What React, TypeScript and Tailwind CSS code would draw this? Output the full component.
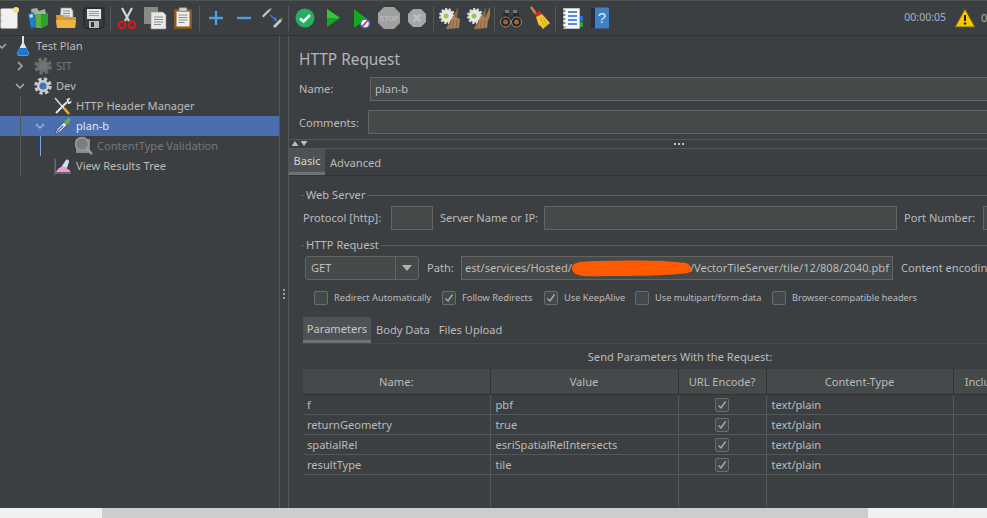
import React from "react";

// --- toolbar drawings ---
function Svg({ children, size = 24 }: { children: React.ReactNode; size?: number }) {
  return (
    <svg width={size} height={size} viewBox="0 0 24 24" fill="none">
      {children}
    </svg>
  );
}

const NewIcon = () => (
  <Svg>
    <rect x="2.500" y="2.500" width="17" height="20" rx="1.500" fill="#f1f1ef" stroke="#9a9a9a" />
    <circle cx="3" cy="9" r=".8" fill="#999" />
    <circle cx="3" cy="15" r=".8" fill="#999" />
    <circle cx="18" cy="4" r="3" fill="#f6e27a" />
  </Svg>
);
const TemplatesIcon = () => (
  <Svg>
    <path d="M5 3l6-1 2 3 6-2 1 5-14 1z" fill="#9fb7a4" />
    <path d="M2 8l6-2 2 15-5 1z" fill="#1d7fd0" />
    <path d="M3.500 9l3-1 .5 3-3 1z" fill="#bfe2f8" />
    <path d="M9 8h6l1 14H10z" fill="#5fb13a" />
    <path d="M15 9l7-2v12l-6 3z" fill="#2ea02c" />
  </Svg>
);
const OpenIcon = () => (
  <Svg>
    <path d="M7 2h10l2 3v8H6z" fill="#e9e9e6" stroke="#8c8c8c" strokeWidth=".7" />
    <path d="M9 5h7M9 7.500h7M9 10h7" stroke="#8c8c8c" />
    <path d="M2 9h7l1 2h12l-1 11H3z" fill="#d9982f" />
    <path d="M2 14h20l-1 8H3z" fill="#eeb445" />
  </Svg>
);
const SaveIcon = () => (
  <Svg>
    <rect x="2" y="2" width="20" height="20" rx="2" fill="#3b3b3b" stroke="#1f1f1f" />
    <rect x="5" y="3" width="14" height="10" fill="#dfe6ee" />
    <path d="M7 5.500h10M7 7.500h10M7 9.500h10" stroke="#7ea4cb" />
    <rect x="7" y="15" width="10" height="7" fill="#b9b9b9" />
    <rect x="9" y="16" width="3" height="5" fill="#333" />
  </Svg>
);
const CutIcon = () => (
  <Svg>
    <path d="M7 2l7 13M17 2l-7 13" stroke="#d4d4d4" strokeWidth="2.200" />
    <circle cx="7" cy="19" r="3.300" stroke="#d81818" strokeWidth="2.200" />
    <circle cx="17" cy="19" r="3.300" stroke="#d81818" strokeWidth="2.200" />
  </Svg>
);
const CopyIcon = () => (
  <Svg>
    <rect x="1" y="1" width="14" height="17" fill="#8a8a88" />
    <path d="M8 6h12l3 3v14H8z" fill="#e8e8e6" stroke="#8f8f8f" strokeWidth=".6" />
    <path d="M11 11h9M11 13.500h9M11 16h9M11 18.500h7" stroke="#8d8d8d" />
  </Svg>
);
const PasteIcon = () => (
  <Svg>
    <rect x="3" y="3" width="18" height="20" rx="1.500" fill="#8a5a22" />
    <path d="M5.500 5.500h13v15h-13z" fill="#efefec" />
    <rect x="8" y="1.500" width="8" height="4" rx="1" fill="#c9c9c6" stroke="#666" strokeWidth=".5" />
    <path d="M7.500 9h9M7.500 11.500h9M7.500 14h9M7.500 16.500h6" stroke="#8d8d8d" />
  </Svg>
);
const PlusIcon = () => (
  <Svg>
    <path d="M12 5v14M5 12h14" stroke="#4f9ee3" strokeWidth="2.400" />
  </Svg>
);
const MinusIcon = () => (
  <Svg>
    <path d="M5 12h14" stroke="#4f9ee3" strokeWidth="2.400" />
  </Svg>
);
const ToggleIcon = () => (
  <Svg>
    <path d="M2 10l7-7 1.500 1.500-7 7z" fill="#c5c7c2" />
    <path d="M9 3l2-1 1 1-1.500 1.500z" fill="#5fae4a" />
    <path d="M13 20l7-7 2 2-7 7z" fill="#c5c7c2" />
    <path d="M20 13l1.500-1.500 1 1.500-1 1.500z" fill="#5fae4a" />
    <path d="M10 9l6 5" stroke="#2f7fe0" strokeWidth="1.500" />
    <path d="M17 15l-1-4-3 3.500z" fill="#2f7fe0" />
  </Svg>
);
const CheckIcon = () => (
  <Svg>
    <circle cx="12" cy="12" r="9.500" fill="#27ae60" />
    <path d="M7 12.500l3.500 3L17 9" stroke="#fff" strokeWidth="2.500" />
  </Svg>
);
const PlayIcon = () => (
  <Svg>
    <path d="M6 3l13 9-13 9z" fill="#13a81f" />
    <path d="M6 3l13 9H6z" fill="#38c43f" />
  </Svg>
);
const PlayNoPauseIcon = () => (
  <Svg>
    <path d="M5 3l13 10-13 9z" fill="#13a81f" />
    <circle cx="16" cy="17.500" r="4.500" fill="#f4f6fa" stroke="#2b6fc9" strokeWidth="1.500" />
    <path d="M13 21l6-7" stroke="#d9262a" strokeWidth="1.500" />
  </Svg>
);
const StopIcon = () => (
  <Svg>
    <path d="M7 1h10l6 6v10l-6 6H7l-6-6V7z" fill="#a0a0a0" />
    <text x="12" y="15" textAnchor="middle" fontSize="7" fontWeight="700" fill="#b9b9b9" fontFamily="Liberation Sans, sans-serif">
      STOP
    </text>
  </Svg>
);
const ShutdownIcon = () => (
  <Svg>
    <path d="M8 3h8l5 5v8l-5 5H8l-5-5V8z" fill="#a6a6a6" />
    <path d="M8.500 8.500l7 7M15.500 8.500l-7 7" stroke="#bdbdbd" strokeWidth="2.800" />
  </Svg>
);
const ClearIcon = ({ two }: { two?: boolean }) => (
  <Svg>
    <circle cx="9" cy="10" r="6.500" fill="#e8e8e8" stroke="#e0e0e0" strokeWidth="3" strokeDasharray="2 1.500" />
    <circle cx="8" cy="10" r="2.500" fill="#9ccb3b" />
    {two && <path d="M24 1l-5 11 3 3 2-5z" fill="#a67c52" />}
    <path d="M20 1l-5 10 4 2z" fill="#8a6a45" />
    <path d="M15 10l-7 13 13-1 1-9z" fill="#a9815a" />
    <path d="M13 14l-2 8M16 14l-2 8M19 14l-1 8" stroke="#7a5a38" strokeWidth=".8" />
  </Svg>
);
const BinocularsIcon = () => (
  <Svg>
    <path d="M5 6h5v5h4V6h5l4 11H1z" fill="#2a2a2a" />
    <rect x="6" y="4" width="4" height="3" fill="#777" />
    <rect x="14" y="4" width="4" height="3" fill="#777" />
    <circle cx="6.500" cy="16" r="5" fill="#222" stroke="#8e8e8e" />
    <circle cx="17.500" cy="16" r="5" fill="#222" stroke="#8e8e8e" />
    <circle cx="6.500" cy="16" r="2.500" fill="#a5622e" />
    <circle cx="17.500" cy="16" r="2.500" fill="#a5622e" />
  </Svg>
);
const BroomIcon = () => (
  <Svg>
    <path d="M4 1l5 7" stroke="#c08a3a" strokeWidth="2.500" />
    <path d="M7 8l6-3 2 3-5 3z" fill="#d8282c" />
    <path d="M9 11l6-3 8 9-7 6-3-4-1 1z" fill="#f2c928" />
    <path d="M13 12l5 9M16 11l4 8" stroke="#c79a17" strokeWidth=".8" />
  </Svg>
);
const LogIcon = () => (
  <Svg>
    <rect x="3" y="2" width="17" height="21" fill="#f7f7f7" stroke="#444" strokeWidth=".6" />
    <path d="M1.500 5h4M1.500 9h4M1.500 13h4M1.500 17h4M1.500 21h4" stroke="#333" />
    <path d="M8 6h9M8 10h9M8 14h9M8 18h9" stroke="#2169d6" strokeWidth="1.300" />
    <rect x="20" y="10" width="3" height="5" fill="#2b6fc9" />
    <rect x="20" y="16" width="3" height="5" fill="#3aa13a" />
  </Svg>
);
const HelpIcon = () => (
  <Svg>
    <rect x="3" y="1.500" width="18" height="21" rx="1" fill="#3f7fc4" />
    <rect x="3" y="1.500" width="4" height="21" fill="#22303f" />
    <text x="14" y="17" textAnchor="middle" fontSize="15" fill="#dbe9f7" fontFamily="Liberation Sans, sans-serif">
      ?
    </text>
  </Svg>
);

// --- tree drawings ---
const Flask = () => (
  <svg width="16" height="20" viewBox="0 0 16 20" fill="none">
    <path d="M7 0h2v7l5 10c.5 1.500-.5 2.500-2 2.500H4c-1.500 0-2.500-1-2-2.500L7 7z" fill="#dfe3e6" />
    <path d="M4.500 12h7l2.500 5.500c0 1-.8 1.500-2 1.500H4c-1.200 0-2-.5-2-1.500z" fill="#1f76d2" />
  </svg>
);
const Gear = ({ hub, body }: { hub: string; body: string }) => (
  <svg width="20" height="20" viewBox="0 0 20 20" fill="none">
    <circle cx="10" cy="10" r="6.500" stroke={body} strokeWidth="4.500" strokeDasharray="3 2.100" />
    <circle cx="10" cy="10" r="6" fill={body} />
    <circle cx="10" cy="10" r="3.500" fill={hub} />
  </svg>
);
const Tools = () => (
  <svg width="18" height="18" viewBox="0 0 18 18" fill="none">
    <path d="M1 1l12 14" stroke="#d8d8d8" strokeWidth="1.500" />
    <path d="M10 11l5 6" stroke="#e2b11c" strokeWidth="2.600" />
    <path d="M2 16L13 5" stroke="#e8e8e8" strokeWidth="2" />
    <path d="M12.500 2.500c1-1.500 3-1.500 4-1l-2 2 1 1.500 2-1.500c.5 2-1.500 4-3.500 3.500z" fill="#e8e8e8" />
  </svg>
);
const Pipette = () => (
  <svg width="18" height="18" viewBox="0 0 18 18" fill="none">
    <path d="M1 17l2-5 7-7 3 3-7 7z" fill="#d7dde0" stroke="#2b2b2b" strokeWidth=".6" />
    <path d="M3 15l6-6" stroke="#3a6aa8" strokeWidth="1.200" />
    <path d="M10 5l4-4c1-.8 3 1 2.500 2.500L13 8z" fill="#69b04a" />
  </svg>
);
const Lens = () => (
  <svg width="20" height="20" viewBox="0 0 20 20" fill="none">
    <path d="M2 3h14v14H2z" fill="#8a8a8a" />
    <circle cx="8" cy="8" r="6.500" fill="#7d7d7d" stroke="#9a9a9a" strokeWidth="1.500" />
    <path d="M13 13l5 5" stroke="#9a9a9a" strokeWidth="2.500" />
  </svg>
);
const ResultsGraph = () => (
  <svg width="18" height="16" viewBox="0 0 18 16" fill="none">
    <path d="M1 1v14h16" stroke="#8e8e8e" />
    <path d="M2 14c2-4 4-4 6-6 2-1 3-1 4 1s2 3 4 3v2z" fill="#ef9ad8" />
    <path d="M8 8l4-6c2-1 3 0 3 2l-2 6z" fill="#cfe0f2" />
  </svg>
);

const Chevron = ({ open, color = "#a8adb0" }: { open?: boolean; color?: string }) => (
  <svg width="10" height="10" viewBox="0 0 10 10" fill="none">
    <path d={open ? "M1 3l4 4 4-4" : "M3 1l4 4-4 4"} stroke={color} strokeWidth="1.500" />
  </svg>
);

const Tick = ({ color = "#a9adaf" }: { color?: string }) => (
  <svg width="10" height="10" viewBox="0 0 10 10" fill="none">
    <path d="M1.500 5.500l2.500 2.500 4.500-6.500" stroke={color} strokeWidth="1.400" />
  </svg>
);

function Box({ checked }: { checked?: boolean }) {
  return (
    <span className="flex h-[14px] w-[14px] shrink-0 items-center justify-center rounded-[2px] border border-[#6b6b6b] bg-[#43494a]">
      {checked && <Tick />}
    </span>
  );
}

function Sep() {
  return (
    <div className="flex h-[25px] w-[5px] shrink-0 justify-center">
      <div className="w-px bg-[#565859]" />
    </div>
  );
}

function Tool({ children }: { children: React.ReactNode }) {
  return <div className="flex h-[35px] w-[28px] shrink-0 items-center justify-center">{children}</div>;
}

function Toolbar() {
  return (
    <div className="flex h-[36px] shrink-0 items-center border-t border-b border-t-[#505354] border-b-[#333536] bg-[#3c3f41] pl-0">
      <div className="-ml-[4px] flex items-center">
        <Tool><NewIcon /></Tool>
        <Tool><TemplatesIcon /></Tool>
        <Tool><OpenIcon /></Tool>
        <Tool><SaveIcon /></Tool>
        <Sep />
        <Tool><CutIcon /></Tool>
        <Tool><CopyIcon /></Tool>
        <Tool><PasteIcon /></Tool>
        <Sep />
        <Tool><PlusIcon /></Tool>
        <Tool><MinusIcon /></Tool>
        <Tool><ToggleIcon /></Tool>
        <Sep />
        <Tool><CheckIcon /></Tool>
        <Tool><PlayIcon /></Tool>
        <Tool><PlayNoPauseIcon /></Tool>
        <Tool><StopIcon /></Tool>
        <Tool><ShutdownIcon /></Tool>
        <Sep />
        <Tool><ClearIcon /></Tool>
        <Tool><ClearIcon two /></Tool>
        <Sep />
        <Tool><BinocularsIcon /></Tool>
        <Tool><BroomIcon /></Tool>
        <Sep />
        <Tool><LogIcon /></Tool>
        <Tool><HelpIcon /></Tool>
      </div>
      <div className="ml-auto flex items-center">
        <span className="mr-[8px] text-[10.5px] text-[#9db4cf]">00:00:05</span>
        <svg width="22" height="20" viewBox="0 0 22 20" fill="none">
          <path d="M11 1l10 18H1z" fill="#f7c800" stroke="#6b5a10" />
          <path d="M11 7v6" stroke="#222" strokeWidth="2" />
          <circle cx="11" cy="15.500" r="1.200" fill="#222" />
        </svg>
        <span className="ml-[5px] w-[6px] overflow-hidden text-[11px] text-[#9db4cf]">0</span>
      </div>
    </div>
  );
}

function TreeRow({
  pad,
  arrow,
  icon,
  label,
  selected,
  dim,
  iconBox = "ml-[4px] w-[24px]",
}: {
  pad: string;
  arrow?: React.ReactNode;
  icon: React.ReactNode;
  label: string;
  selected?: boolean;
  dim?: boolean;
  iconBox?: string;
}) {
  return (
    <div className={`flex h-[20px] items-center ${pad} ${selected ? "bg-[#4b6eaf]" : ""}`}>
      <span className="flex w-[14px] shrink-0 items-center justify-center">{arrow}</span>
      <span className={`flex shrink-0 items-center justify-center ${iconBox}`}>{icon}</span>
      <span className={`ml-[1px] whitespace-nowrap pt-px ${selected ? "text-[#e4e8ee]" : dim ? "text-[#777777]" : "text-[#bbbbbb]"}`}>
        {label}
      </span>
    </div>
  );
}

function Tree() {
  return (
    <div className="relative w-[279px] shrink-0">
      <TreeRow
        pad="pl-0"
        iconBox="w-[21px]"
        arrow={<span className="-ml-[10px]"><Chevron open /></span>}
        icon={<span className="mr-[3px]"><Flask /></span>}
        label="Test Plan"
      />
      <TreeRow pad="pl-[13px]" arrow={<Chevron />} icon={<Gear body="#6e6e6e" hub="#747474" />} label="SIT" dim />
      <TreeRow pad="pl-[13px]" arrow={<Chevron open />} icon={<Gear body="#c7cbce" hub="#3f74b8" />} label="Dev" />
      <TreeRow pad="pl-[33px]" icon={<Tools />} label="HTTP Header Manager" />
      <TreeRow pad="pl-[33px]" arrow={<Chevron open color="#9fb2d4" />} icon={<Pipette />} label="plan-b" selected />
      <TreeRow pad="pl-[54px]" icon={<Lens />} label="ContentType Validation" dim />
      <TreeRow pad="pl-[33px]" icon={<ResultsGraph />} label="View Results Tree" />
      {/* guide lines of the tree */}
      <div className="absolute left-[20px] top-[60px] h-[80px] w-px bg-[#55585a]" />
      <div className="absolute left-[40px] top-[100px] h-[20px] w-px bg-[#6fa8e8]" />
      <div className="absolute left-[54px] top-[122px] h-[18px] w-px bg-[#55585a]" />
    </div>
  );
}

function Legend({ label }: { label: string }) {
  return (
    <div className="flex h-[14px] items-center">
      <div className="h-px w-[3px] bg-[#5b5e60]" />
      <span className="mx-[2px] whitespace-nowrap">{label}</span>
      <div className="h-px flex-1 bg-[#5b5e60]" />
    </div>
  );
}

const inputCls = "h-[24px] border border-[#646464] bg-[#45494a]";

const checks = [
  { label: "Redirect Automatically", cls: "w-[128px]", on: false },
  { label: "Follow Redirects", cls: "w-[102px]", on: true },
  { label: "Use KeepAlive", cls: "w-[91px]", on: true },
  { label: "Use multipart/form-data", cls: "w-[137px]", on: false },
  { label: "Browser-compatible headers", cls: "w-[160px]", on: false },
];

const params = [
  ["f", "pbf"],
  ["returnGeometry", "true"],
  ["spatialRel", "esriSpatialRelIntersects"],
  ["resultType", "tile"],
];

function ParamsTable() {
  const cell = "border-r border-b border-[#55585a] px-[5px] pt-[2px] leading-[16px] text-left font-normal";
  const first = "border-r border-b border-[#55585a] px-[4px] pt-[2px] leading-[16px] text-left font-normal";
  const boxCell = "border-r border-b border-[#55585a] pt-px";
  const head = "h-[25px] border-r border-b border-[#303234] bg-[#45494a] pt-[3px] text-center font-normal";
  return (
    <table className="w-[754px] table-fixed border-collapse">
      <thead>
        <tr>
          <th className={`${head} w-[187px]`}>Name:</th>
          <th className={`${head} w-[188px]`}>Value</th>
          <th className={`${head} w-[88px]`}>URL Encode?</th>
          <th className={`${head} w-[187px]`}>Content-Type</th>
          <th className={`${head} w-[104px]`}>Include Equals?</th>
        </tr>
      </thead>
      <tbody>
        {params.map(([name, value]) => (
          <tr key={name} className="h-[20px]">
            <td className={first}>{name}</td>
            <td className={cell}>{value}</td>
            <td className={boxCell}>
              <div className="flex justify-center">
                <Box checked />
              </div>
            </td>
            <td className={cell}>text/plain</td>
            <td className={boxCell} />
          </tr>
        ))}
        <tr className="h-[33px]">
          <td className="border-r border-[#55585a]" />
          <td className="border-r border-[#55585a]" />
          <td className="border-r border-[#55585a]" />
          <td className="border-r border-[#55585a]" />
          <td />
        </tr>
      </tbody>
    </table>
  );
}

function HttpRequest() {
  return (
    <div className="min-w-0 flex-1 overflow-hidden border-l border-[#55585a]">
      <div className="w-[800px]">
        <div className="pl-[10px]">
          <div className="flex h-[41px] items-end pb-[10px] text-[15.4px] leading-none text-[#b5b5b5]">HTTP Request</div>
          <div className="flex h-[24px] items-center">
            <span className="w-[71px] pt-px">Name:</span>
            <div className={`${inputCls} flex flex-1 items-center px-[4px] pt-px`}>plan-b</div>
          </div>
          <div className="mt-[9px] flex h-[24px] items-center">
            <span className="w-[69px] pt-[2px]">Comments:</span>
            <div className={`${inputCls} flex-1`} />
          </div>
        </div>
        <div className="mt-[5px] flex h-[10px] items-center border-t border-b border-[#55585a] pl-[3px]">
          <svg width="22" height="6" viewBox="0 0 22 6" fill="#b9bcbe">
            <path d="M3 0l3.500 5h-7zM12 5L8.500 0h7z" />
          </svg>
          <div className="ml-[360px] flex gap-[2px]">
            <span className="h-[2px] w-[2px] bg-[#b9bcbe]" />
            <span className="h-[2px] w-[2px] bg-[#b9bcbe]" />
            <span className="h-[2px] w-[2px] bg-[#b9bcbe]" />
          </div>
        </div>
        <div className="flex h-[27px] items-stretch border-b border-[#333536]">
          <div className="flex w-[36px] items-center justify-center border-b-[3px] border-[#6e7274] bg-[#4e5254] pt-[2px] text-[#d2d2d2]">Basic</div>
          <div className="flex items-center pl-[5px] pt-[2px]">Advanced</div>
        </div>
        <div className="pl-[12px] pt-[12px]">
          <Legend label="Web Server" />
          <div className="mt-[4px] flex items-center pl-[2px]">
            <span className="w-[88px]">Protocol [http]:</span>
            <div className={`${inputCls} w-[42px]`} />
            <span className="ml-[7px] w-[104px]">Server Name or IP:</span>
            <div className={`${inputCls} w-[353px]`} />
            <span className="ml-[7px] w-[79px]">Port Number:</span>
            <div className={`${inputCls} w-[60px]`} />
          </div>
          <div className="mt-[8px]">
            <Legend label="HTTP Request" />
          </div>
          <div className="mt-[4px] flex items-center pl-[4px]">
            <div className="flex h-[24px] w-[114px] items-stretch rounded-[3px] border border-[#646464] bg-[#45494a]">
              <span className="flex flex-1 items-center border-r border-[#646464] pl-[5px]">GET</span>
              <span className="flex w-[22px] items-center justify-center">
                <svg width="10" height="6" viewBox="0 0 10 6" fill="#b0b3b5">
                  <path d="M0 0h10L5 6z" />
                </svg>
              </span>
            </div>
            <span className="ml-[8px] w-[34px]">Path:</span>
            <div className={`${inputCls} relative flex w-[432px] items-center justify-between px-[3px]`}>
              <span>est/services/Hosted/</span>
              <span>/VectorTileServer/tile/12/808/2040.pbf</span>
              {/* painted over by hand in the original capture */}
              <svg className="absolute left-[109px] top-[2px]" width="122" height="20" viewBox="0 0 122 20">
                <path d="M1 9C1 3 10 2 30 2c30-1 66-1 85 2 6 2 7 8 2 10-25 3-60 3-80 3-15 0-36 3-36-8z" fill="#ff5a00" />
              </svg>
            </div>
            <span className="ml-[8px] whitespace-nowrap">Content encoding:</span>
          </div>
          <div className="mt-[11px] flex h-[14px] items-center pl-[13px] text-[9.25px]">
            {checks.map((c) => (
              <div key={c.label} className={`flex shrink-0 items-center gap-[6px] ${c.cls}`}>
                <Box checked={c.on} />
                <span className="whitespace-nowrap">{c.label}</span>
              </div>
            ))}
          </div>
          <div className="mt-[12px] flex h-[27px] items-stretch border-b border-[#47494b] pl-[2px]">
            <div className="flex w-[68px] items-center justify-center border-b-[3px] border-[#6e7274] bg-[#4e5254] pt-[2px] text-[#c8c8c8]">Parameters</div>
            <div className="flex items-center pl-[5px]">Body Data</div>
            <div className="flex items-center pl-[9px]">Files Upload</div>
          </div>
          <div className="ml-[2px] w-[754px]">
            <div className="flex h-[25px] items-center justify-center pt-px">Send Parameters With the Request:</div>
            <ParamsTable />
          </div>
        </div>
      </div>
    </div>
  );
}

export default function App() {
  return (
    <div className="flex h-[518px] w-[987px] flex-col overflow-hidden bg-[#3c3f41] font-['Noto_Sans',sans-serif] text-[11.1px] text-[#bbbbbb]">
      <Toolbar />
      <div className="flex min-h-0 flex-1">
        <Tree />
        <div className="flex w-[9px] shrink-0 flex-col items-center justify-start border-l border-[#55585a] pt-[253px]">
          <span className="mb-[2px] h-[2px] w-[2px] bg-[#a0a0a0]" />
          <span className="mb-[2px] h-[2px] w-[2px] bg-[#a0a0a0]" />
          <span className="h-[2px] w-[2px] bg-[#a0a0a0]" />
        </div>
        <HttpRequest />
      </div>
      {/* window scrollbar */}
      <div className="h-[10px] shrink-0 bg-[#f0f0f0] pl-[102px] pr-[119px]">
        <div className="h-full bg-[#cdcdcd]" />
      </div>
    </div>
  );
}
